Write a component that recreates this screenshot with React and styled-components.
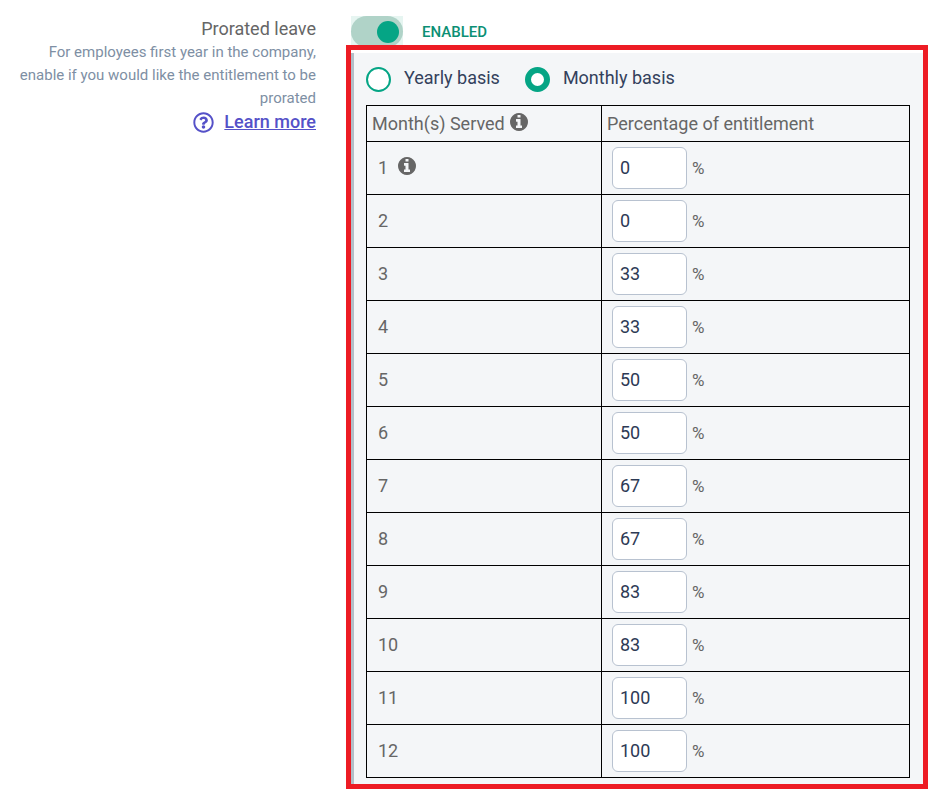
import React, { useState } from "react";
import styled, { createGlobalStyle } from "styled-components";
import { FaRegQuestionCircle } from "react-icons/fa";

const initialRates = [0, 0, 33, 33, 50, 50, 67, 67, 83, 83, 100, 100];

const InfoIcon = () => (
  <InfoSvg viewBox="128 128 1536 1536" aria-hidden="true">
    <path d="M1152 1376v-160q0-14-9-23t-23-9h-96v-512q0-14-9-23t-23-9h-320q-14 0-23 9t-9 23v160q0 14 9 23t23 9h96v320h-96q-14 0-23 9t-9 23v160q0 14 9 23t23 9h448q14 0 23-9t9-23zM1024 480v-160q0-14-9-23t-23-9h-192q-14 0-23 9t-9 23v160q0 14 9 23t23 9h192q14 0 23-9t9-23zM1664 896q0 209-103 385.5t-279.5 279.5-385.5 103-385.5-103-279.5-279.5-103-385.5 103-385.5 279.5-279.5 385.5-103 385.5 103 279.5 279.5 103 385.5z" />
  </InfoSvg>
);

export default function App() {
  const [enabled, setEnabled] = useState(true);
  const [basis, setBasis] = useState("monthly");
  const [rates, setRates] = useState(initialRates.map(String));

  const changeRate = (index, value) => {
    setRates(rates.map((rate, i) => (i === index ? value : rate)));
  };

  return (
    <>
      <GlobalStyle />
      <Setting>
        <Description>
          <Title htmlFor="prorated">Prorated leave</Title>
          <Hint>
            For employees first year in the company, enable if you would like
            the entitlement to be prorated
          </Hint>
          <LearnMore href="#learn-more">
            <FaRegQuestionCircle size={21} />
            <span>Learn more</span>
          </LearnMore>
        </Description>

        <Content>
          <SwitchRow>
            <SwitchBox>
              <Switch
                id="prorated"
                type="checkbox"
                checked={enabled}
                onChange={(e) => setEnabled(e.target.checked)}
              />
            </SwitchBox>
            <Status htmlFor="prorated">{enabled ? "ENABLED" : "DISABLED"}</Status>
          </SwitchRow>

          <Frame>
            <Panel>
              <Options>
                <Option>
                  <Radio
                    type="radio"
                    name="basis"
                    checked={basis === "yearly"}
                    onChange={() => setBasis("yearly")}
                  />
                  Yearly basis
                </Option>
                <Option>
                  <Radio
                    type="radio"
                    name="basis"
                    checked={basis === "monthly"}
                    onChange={() => setBasis("monthly")}
                  />
                  Monthly basis
                </Option>
              </Options>

              <Table>
                <thead>
                  <tr>
                    <HeadCell $width="235px">
                      <Inline $gap="5px">
                        Month(s) Served <InfoIcon />
                      </Inline>
                    </HeadCell>
                    <HeadCell>Percentage of entitlement</HeadCell>
                  </tr>
                </thead>
                <tbody>
                  {rates.map((rate, i) => (
                    <tr key={i}>
                      <MonthCell>
                        <Inline $gap="10px">
                          {i + 1} {i === 0 && <InfoIcon />}
                        </Inline>
                      </MonthCell>
                      <Cell>
                        <Rate>
                          <RateInput
                            type="text"
                            aria-label={`Percentage for month ${i + 1}`}
                            value={rate}
                            onChange={(e) => changeRate(i, e.target.value)}
                          />
                          %
                        </Rate>
                      </Cell>
                    </tr>
                  ))}
                </tbody>
              </Table>
            </Panel>
          </Frame>
        </Content>
      </Setting>
    </>
  );
}

const GlobalStyle = createGlobalStyle`
  * {
    box-sizing: border-box;
  }
  body {
    margin: 0;
    background: #fff;
    color: #666;
    font-family: Roboto, "Liberation Sans", sans-serif;
    font-size: 18px;
  }
`;

const InfoSvg = styled.svg`
  width: 18px;
  height: 18px;
  margin-bottom: 3px;
  fill: currentColor;
`;

const Setting = styled.section`
  display: grid;
  grid-template-columns: 312px 1fr;
  gap: 30px;
  padding: 16px 10px 9px 4px;
`;

const Description = styled.div`
  display: flex;
  flex-direction: column;
  align-items: flex-end;
  text-align: right;
`;

const Title = styled.label`
  line-height: 25px;
`;

const Hint = styled.p`
  margin: 0;
  color: #7e8fa4;
  font-size: 15px;
  line-height: 23px;
`;

const LearnMore = styled.a`
  display: flex;
  align-items: center;
  gap: 10px;
  color: #5551c8;
  font-weight: 500;
  line-height: 24px;
  text-decoration: none;

  span {
    text-decoration: underline;
  }
`;

const Content = styled.div`
  min-width: 0;
`;

const SwitchRow = styled.div`
  display: flex;
  align-items: center;
  gap: 19px;
  padding-left: 5px;
`;

const SwitchBox = styled.span`
  display: flex;
  background: #e6f5f1;
`;

const Switch = styled.input`
  appearance: none;
  display: flex;
  align-items: center;
  width: 52px;
  height: 31px;
  margin: 0;
  padding: 0 4px;
  border-radius: 16px;
  background: #b0d3c8;
  cursor: pointer;

  &::before {
    content: "";
    width: 22px;
    height: 22px;
    border-radius: 50%;
    background: #fff;
  }
  &:checked {
    justify-content: flex-end;
  }
  &:checked::before {
    background: #05a585;
  }
`;

const Status = styled.label`
  color: #0b8f74;
  font-size: 15px;
  font-weight: 500;
`;

/* the highlight overlaps the bottom edge of the switch */
const Frame = styled.div`
  position: relative;
  margin-top: -2px;
  padding-top: 3px;
  border: 5px solid #ed1c24;
  background: #fff;
`;

const Panel = styled.div`
  padding: 12px 13px 6px 12px;
  border-left: 3px solid #b3bfc8;
  background: #f4f6f8;
`;

const Options = styled.div`
  display: flex;
  gap: 25px;
  margin-bottom: 13px;
`;

const Option = styled.label`
  display: flex;
  align-items: flex-end;
  gap: 13px;
  height: 27px;
  color: #33415c;
  line-height: 28px;
`;

const Radio = styled.input`
  appearance: none;
  width: 25px;
  height: 25px;
  margin: 0;
  border: 2px solid #05a585;
  border-radius: 50%;
  background: #fff;

  &:checked {
    border-width: 6px;
  }
`;

const Table = styled.table`
  width: 100%;
  border-collapse: collapse;
`;

const HeadCell = styled.th`
  width: ${(props) => props.$width || "auto"};
  height: 36px;
  padding: 0 5px;
  border: 1px solid #000;
  font-weight: 400;
  text-align: left;
`;

const Cell = styled.td`
  height: 53px;
  padding: 0 10px;
  border: 1px solid #000;
`;

const MonthCell = styled(Cell)`
  padding: 0 11px 2px;
`;

const Inline = styled.span`
  display: flex;
  align-items: center;
  gap: ${(props) => props.$gap};
`;

const Rate = styled.div`
  display: flex;
  align-items: center;
  gap: 5px;
  font-size: 17px;
`;

const RateInput = styled.input`
  width: 75px;
  height: 42px;
  padding: 0 7px 2px;
  border: 1px solid #b8c2d0;
  border-radius: 6px;
  background: #fff;
  color: #2d3a55;
  font-family: inherit;
  font-size: 18px;
`;
